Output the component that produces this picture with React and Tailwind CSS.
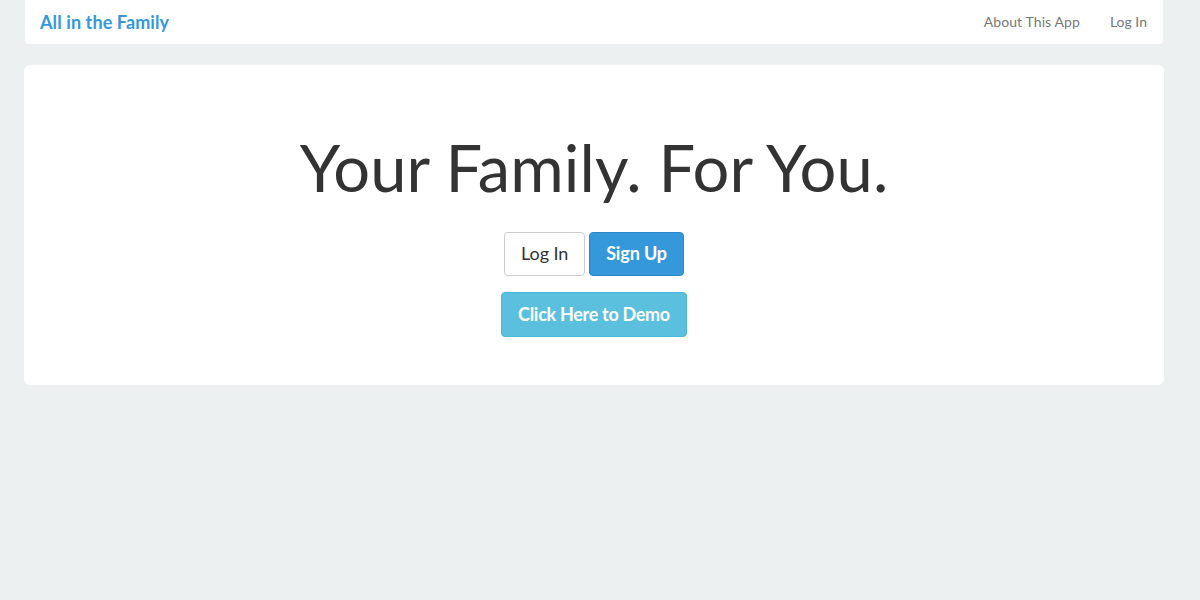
export default function App() {
  return (
    <div className="min-h-[600px] bg-[#ecf0f1] text-[#333] font-['Lato','Liberation_Sans',sans-serif]">
      <div className="mx-[25px] w-[1138px] h-[44px] bg-white rounded-b-[4px] flex items-center justify-between px-[15px]">
        <span className="text-[18px] font-bold text-[#3498db] tracking-[0.1px]">All in the Family</span>
        <div className="flex items-center gap-[30px] text-[14px] text-[#777] pr-[1px] pb-[2px]">
          <span className="tracking-[0.1px]">About This App</span>
          <span>Log In</span>
        </div>
      </div>
      <div className="mx-[24px] mt-[21px] w-[1140px] h-[320px] bg-white rounded-[6px] flex flex-col items-center pt-[67px]">
        <h1 className="text-[65px] leading-[1.1] text-[#333] tracking-[0.1px]">Your Family. For You.</h1>
        <div className="mt-[28px] flex gap-[4px]">
          <button className="h-[44px] px-[16px] text-[18px] border border-[#ccc] rounded-[4px] bg-white text-[#333] tracking-[-0.1px]">Log In</button>
          <button className="h-[44px] px-[16px] text-[18px] font-bold border border-[#2a88c8] rounded-[4px] bg-[#3498db] text-white tracking-[-0.15px]">Sign Up</button>
        </div>
        <button className="mt-[16px] h-[45px] px-[16px] text-[18px] font-bold border border-[#46b8da] rounded-[4px] bg-[#5bc0de] text-white tracking-[-0.3px]">Click Here to Demo</button>
      </div>
    </div>
  );
}
